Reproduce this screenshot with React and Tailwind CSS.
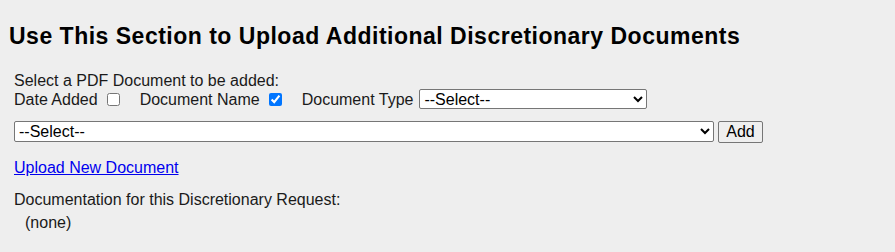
export default function App() {
  return (
    <div className="min-h-[252px] bg-[#eeeeee] px-[9px] pt-[22px] text-black font-['Liberation_Sans',Arial,sans-serif]">
      <h2 className="text-[23px] font-bold leading-[28px] tracking-[0.5px]">
        Use This Section to Upload Additional Discretionary Documents
      </h2>
      <div className="ml-[5px] mt-[22px] text-[16px] leading-[17px] text-[#1a1a1a]">
        <div>Select a PDF Document to be added:</div>
        <div className="flex items-center h-[20px]">
          <span>Date Added</span>
          <input type="checkbox" className="ml-[9px] w-[13px] h-[13px]" />
          <span className="ml-[20px]">Document Name</span>
          <input type="checkbox" defaultChecked className="ml-[9px] w-[13px] h-[13px]" />
          <span className="ml-[20px]">Document Type</span>
          <select className="ml-[6px] w-[228px] h-[20px] bg-white border border-[#767676] rounded-[2px] text-[16px] text-black">
            <option>--Select--</option>
          </select>
        </div>
        <div className="flex items-start mt-[12px]">
          <select className="w-[700px] h-[21px] bg-white border border-[#767676] rounded-[2px] text-[16px] text-black">
            <option>--Select--</option>
          </select>
          <button className="ml-[4px] w-[45px] h-[22px] bg-[#efefef] border border-[#767676] rounded-[2px] text-[16px] leading-[18px] text-black">
            Add
          </button>
        </div>
        <a href="#" className="block mt-[16px] text-[#0000ee] underline w-fit">
          Upload New Document
        </a>
        <div className="mt-[15px]">Documentation for this Discretionary Request:</div>
        <div className="ml-[11px] mt-[6px]">(none)</div>
      </div>
    </div>
  )
}
